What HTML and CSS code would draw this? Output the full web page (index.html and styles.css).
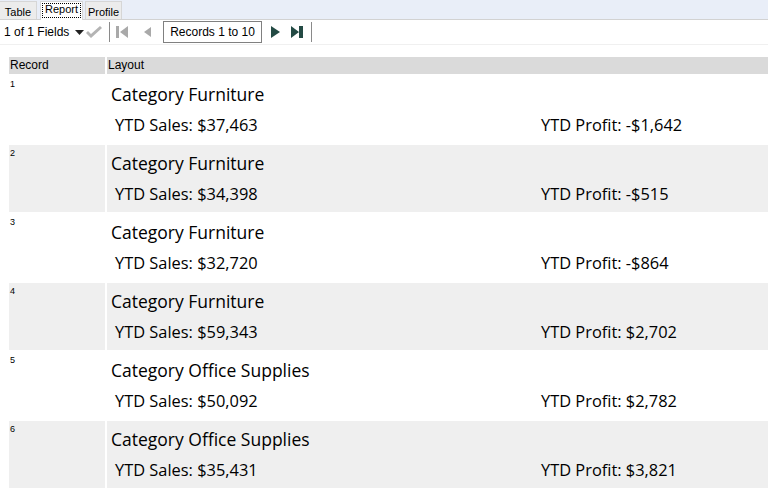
FILE: index.html
```html
<!DOCTYPE html>
<html lang="en">
<head>
    <meta charset="UTF-8">
    <title>Report</title>
    <link rel="stylesheet" href="styles.css">
</head>
<body>
    <div class="tabs">
        <span class="tab first">Table</span>
        <span class="tab active">Report</span>
        <span class="tab last">Profile</span>
    </div>
    <div class="toolbar">
        <span class="fields">1 of 1 Fields</span>
        <svg class="caret" width="9" height="5" viewBox="0 0 9 5"><path d="M0 0h9L4.5 5z" fill="#222"/></svg>
        <svg class="check" width="17" height="13" viewBox="0 0 17 13"><path d="M0 7l5 5L16 2 14 0 5 8 2 5z" fill="#b4b4b4"/></svg>
        <span class="sep"></span>
        <svg class="first-rec" width="12" height="12" viewBox="0 0 12 12"><path d="M0 0h3v12H0zM12 0v12L4 6z" fill="#a9a9a9"/></svg>
        <svg class="prev-rec" width="7" height="12" viewBox="0 0 7 12"><path d="M7 1v10L0 6z" fill="#a9a9a9"/></svg>
        <span class="records">Records 1 to 10</span>
        <svg class="next-rec" width="9" height="12" viewBox="0 0 9 12"><path d="M0 0v12l9-6z" fill="#234a44"/></svg>
        <svg class="last-rec" width="12" height="12" viewBox="0 0 12 12"><path d="M0 0v12l8-6zM8 0h4v12H8z" fill="#234a44"/></svg>
        <span class="sep"></span>
    </div>
    <div class="report">
        <div class="head">Record</div>
        <div class="head">Layout</div>

        <div class="num">1</div>
        <div class="layout">
            <div class="category">Category Furniture</div>
            <div class="figures"><span class="sales">YTD Sales: $37,463</span><span>YTD Profit: -$1,642</span></div>
        </div>

        <div class="num alt">2</div>
        <div class="layout alt">
            <div class="category">Category Furniture</div>
            <div class="figures"><span class="sales">YTD Sales: $34,398</span><span>YTD Profit: -$515</span></div>
        </div>

        <div class="num">3</div>
        <div class="layout">
            <div class="category">Category Furniture</div>
            <div class="figures"><span class="sales">YTD Sales: $32,720</span><span>YTD Profit: -$864</span></div>
        </div>

        <div class="num alt">4</div>
        <div class="layout alt">
            <div class="category">Category Furniture</div>
            <div class="figures"><span class="sales">YTD Sales: $59,343</span><span>YTD Profit: $2,702</span></div>
        </div>

        <div class="num">5</div>
        <div class="layout">
            <div class="category">Category Office Supplies</div>
            <div class="figures"><span class="sales">YTD Sales: $50,092</span><span>YTD Profit: $2,782</span></div>
        </div>

        <div class="num alt">6</div>
        <div class="layout alt">
            <div class="category">Category Office Supplies</div>
            <div class="figures"><span class="sales">YTD Sales: $35,431</span><span>YTD Profit: $3,821</span></div>
        </div>

        <div class="num">7</div>
        <div class="layout"></div>
    </div>
</body>
</html>
```

FILE: styles.css
```css
body {
    margin: 0;
    font-family: "Liberation Sans", Arial, sans-serif;
    font-size: 12px;
    color: #000;
    background: #fff;
    height: 495px;
    overflow: hidden;
}
.tabs {
    display: flex;
    align-items: flex-end;
    height: 19px;
    background: #e9eef8;
    border-bottom: 1px solid #d2d2d2;
}
.tab {
    height: 18px;
    line-height: 20px;
    font-size: 11px;
    text-align: center;
    background: #ececec;
    border: 1px solid #d6d6d6;
    border-bottom: none;
    box-sizing: border-box;
}
.tab.first {
    width: 37px;
    border-left: none;
    margin-right: 3px;
}
.tab.active {
    width: 43px;
    height: 19px;
    line-height: 15px;
    margin-bottom: -1px;
    margin-right: 2px;
    background: #fff;
    outline: 1px dotted #000;
    outline-offset: -3px;
}
.tab.last {
    width: 37px;
}
.toolbar {
    display: flex;
    align-items: center;
    height: 24px;
    border-bottom: 1px solid #f0f0f0;
    padding-left: 4px;
}
.fields {
    width: 71px;
}
.caret {
    margin-right: 2px;
}
.check {
    margin-right: 6px;
}
.sep {
    width: 1px;
    height: 20px;
    background: #8a8a8a;
}
.first-rec {
    margin-left: 6px;
}
.prev-rec {
    margin-left: 16px;
}
.records {
    border: 1px solid #808080;
    height: 20px;
    line-height: 20px;
    width: 97px;
    text-align: center;
    margin: 0 9px 0 12px;
}
.next-rec {
    margin-right: 11px;
}
.last-rec {
    margin-right: 8px;
}
.report {
    display: grid;
    grid-template-columns: 96px 1fr;
    grid-auto-rows: 67px;
    grid-template-rows: 17px;
    gap: 2px;
    margin: 12px 0 0 9px;
}
.head {
    background: #dadada;
    line-height: 17px;
    padding-left: 1px;
}
.num {
    font-size: 9px;
    padding: 3px 0 0 1px;
}
.alt {
    background: #efefef;
}
.layout {
    font-family: "Open Sans", "Noto Sans", sans-serif;
    padding: 6px 0 0 4px;
}
.category {
    font-size: 17.5px;
    height: 31px;
}
.figures {
    display: flex;
    font-size: 16.4px;
    padding-left: 4px;
}
.sales {
    width: 426px;
}
```
